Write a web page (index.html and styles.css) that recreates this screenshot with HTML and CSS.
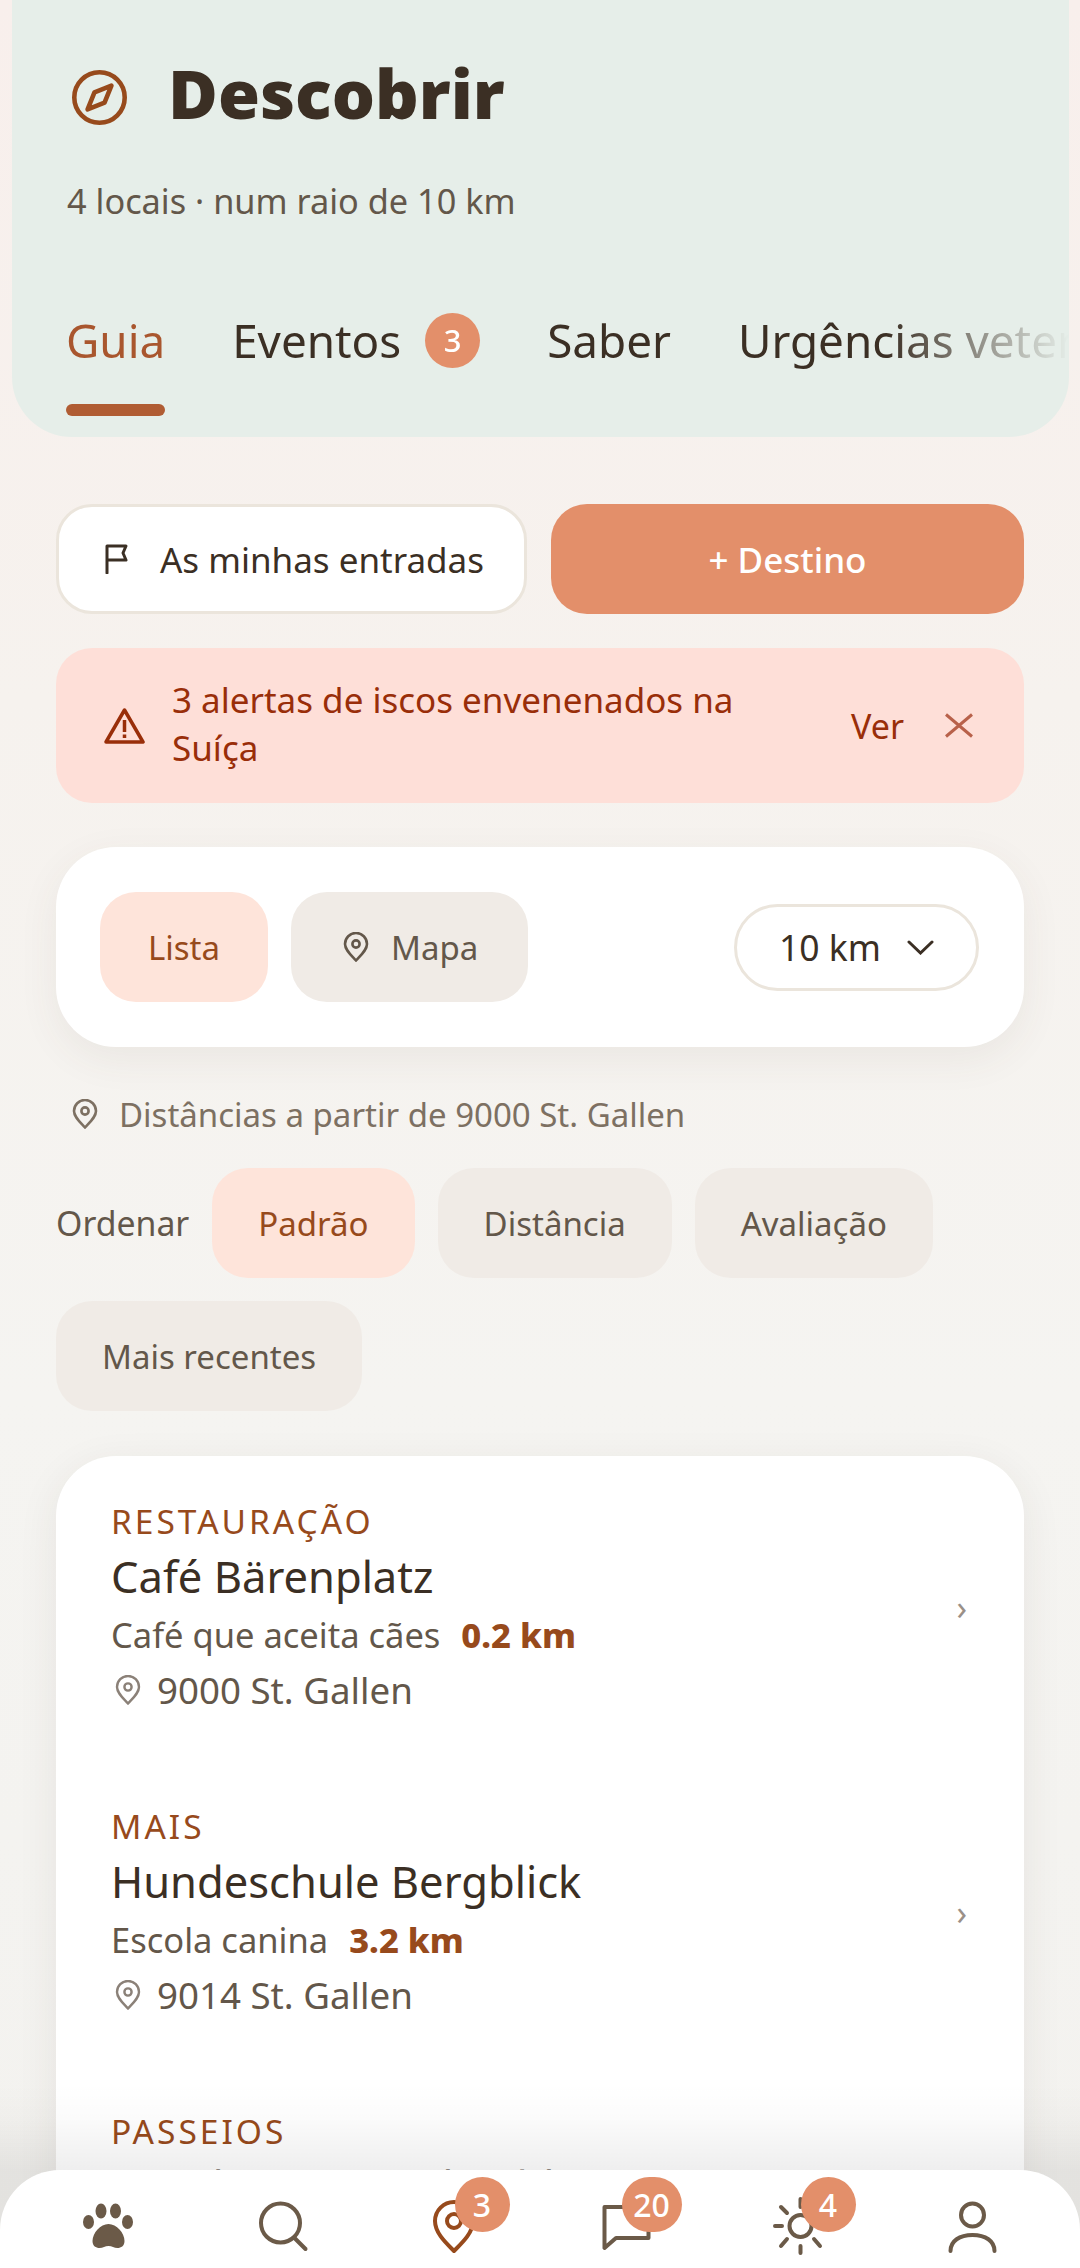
FILE: index.html
```html
<!DOCTYPE html>
<html lang="pt">
<head>
  <meta charset="UTF-8">
  <title>Descobrir</title>
  <link rel="stylesheet" href="styles.css">
</head>
<body>
  <div class="screen">
    <header class="top">
      <div class="title-row">
        <svg class="compass" viewBox="0 0 24 24" fill="none" stroke="#974a1c" stroke-width="2" stroke-linejoin="round" stroke-linecap="round">
          <circle cx="12" cy="12" r="11"/>
          <path d="M17.200 6.800L14.200 14.200 6.800 17.200 9.800 9.800z"/>
        </svg>
        <h1>Descobrir</h1>
      </div>
      <p class="subtitle">4 locais · num raio de 10 km</p>
      <nav class="tabs">
        <span class="tab active">Guia</span>
        <span class="tab">Eventos <b class="tab-badge">3</b></span>
        <span class="tab">Saber</span>
        <span class="tab">Urgências veterinárias</span>
      </nav>
    </header>

    <main class="content">
      <div class="actions">
        <button class="btn btn-white">
          <svg class="flag" viewBox="0 0 23 30" fill="none" stroke="#3b2f24" stroke-width="3" stroke-linejoin="round" stroke-linecap="round">
            <path d="M2 29V2h19l-3 7 3 7H2"/>
          </svg>
          As minhas entradas
        </button>
        <button class="btn btn-orange">+ Destino</button>
      </div>

      <div class="alert">
        <svg class="warn" viewBox="0 0 41 37" fill="none" stroke="#992e09" stroke-width="3.500" stroke-linejoin="round">
          <path d="M20.500 3L39 35H2z"/>
          <path d="M20.500 13v12M20.500 27.500v3.500"/>
        </svg>
        <p class="alert-text">3 alertas de iscos envenenados na Suíça</p>
        <span class="alert-link">Ver</span>
        <svg class="close" viewBox="0 0 30 25" fill="none" stroke="#b8614a" stroke-width="3">
          <path d="M2 1.500l26 22M28 1.500l-26 22"/>
        </svg>
      </div>

      <section class="panel">
        <span class="chip chip-on chip-list">Lista</span>
        <span class="chip chip-map">
          <svg class="pin" viewBox="0 0 26 30" fill="none" stroke="currentColor" stroke-width="2.600"><path d="M13 28.500C8 23 2 18 2 12a11 11 0 0 1 22 0c0 6-6 11-11 16.500z"/><circle cx="13" cy="12" r="3.600"/></svg>
          Mapa
        </span>
        <span class="select">
          10 km
          <svg class="caret" viewBox="0 0 27 15" fill="none" stroke="#3b2f24" stroke-width="3" stroke-linecap="round"><path d="M2 2l11.500 11L25 2"/></svg>
        </span>
      </section>

      <p class="origin">
        <svg class="pin" viewBox="0 0 26 30" fill="none" stroke="currentColor" stroke-width="2.600"><path d="M13 28.500C8 23 2 18 2 12a11 11 0 0 1 22 0c0 6-6 11-11 16.500z"/><circle cx="13" cy="12" r="3.600"/></svg>
        Distâncias a partir de 9000 St. Gallen
      </p>

      <div class="sort">
        <span class="sort-label">Ordenar</span>
        <span class="chip chip-on">Padrão</span>
        <span class="chip">Distância</span>
        <span class="chip">Avaliação</span>
        <span class="chip">Mais recentes</span>
      </div>

      <section class="list">
        <article class="item">
          <div class="item-body">
            <div class="cat">RESTAURAÇÃO</div>
            <div class="name">Café Bärenplatz</div>
            <div class="desc">Café que aceita cães <b class="dist">0.2 km</b></div>
            <div class="loc">
              <svg class="pin" viewBox="0 0 26 30" fill="none" stroke="currentColor" stroke-width="2.400"><path d="M13 28.500C8 23 2 18 2 12a11 11 0 0 1 22 0c0 6-6 11-11 16.500z"/><circle cx="13" cy="12" r="3.600"/></svg>
              <span>9000 St. Gallen</span>
            </div>
          </div>
          <span class="chev">›</span>
        </article>
        <article class="item">
          <div class="item-body">
            <div class="cat">MAIS</div>
            <div class="name">Hundeschule Bergblick</div>
            <div class="desc">Escola canina <b class="dist">3.2 km</b></div>
            <div class="loc">
              <svg class="pin" viewBox="0 0 26 30" fill="none" stroke="currentColor" stroke-width="2.400"><path d="M13 28.500C8 23 2 18 2 12a11 11 0 0 1 22 0c0 6-6 11-11 16.500z"/><circle cx="13" cy="12" r="3.600"/></svg>
              <span>9014 St. Gallen</span>
            </div>
          </div>
          <span class="chev">›</span>
        </article>
        <article class="item">
          <div class="item-body">
            <div class="cat">PASSEIOS</div>
            <div class="name">Hundewiese Bad Wildt</div>
          </div>
        </article>
      </section>
    </main>

    <div class="fade"></div>

    <nav class="bottom">
      <span class="nav-item">
        <svg viewBox="0 0 60 60" fill="#6b5a48"><ellipse cx="10.500" cy="26" rx="5.500" ry="7"/><ellipse cx="23" cy="15" rx="5.500" ry="7.500"/><ellipse cx="37.500" cy="15" rx="5.500" ry="7.500"/><ellipse cx="49.500" cy="26" rx="5.500" ry="7"/><path d="M30.500 28c8 0 16 9 16 17 0 5-3.500 7-7 7-3.500 0-5.500-2-9-2s-5.500 2-9 2c-3.500 0-7-2-7-7 0-8 8-17 16-17z"/></svg>
      </span>
      <span class="nav-item">
        <svg viewBox="0 0 60 60" fill="none" stroke="#6b5a48" stroke-width="4" stroke-linecap="round"><circle cx="29.500" cy="27" r="19.500"/><path d="M43.500 42l11 11"/></svg>
      </span>
      <span class="nav-item">
        <svg viewBox="0 0 60 60" fill="none" stroke="#974a1c" stroke-width="4" stroke-linejoin="round"><path d="M30 55C22 47 11 37 11 25a19 19 0 0 1 38 0c0 12-11 22-19 30z"/><circle cx="30" cy="25" r="7"/></svg>
        <b class="nav-badge">3</b>
      </span>
      <span class="nav-item">
        <svg viewBox="0 0 60 60" fill="none" stroke="#6b5a48" stroke-width="4" stroke-linejoin="round"><path d="M7.500 11H51.500V42H19L7.500 52z"/></svg>
        <b class="nav-badge nav-badge-wide">20</b>
      </span>
      <span class="nav-item">
        <svg viewBox="0 0 60 60" fill="none" stroke="#6b5a48" stroke-width="4" stroke-linecap="round"><circle cx="30.500" cy="30" r="11"/><path d="M30.500 3v8M30.500 50v7M5 30h7M49 30h7M11 11l6 6M44 43l6 7M17 43l-6 7M50 11l-6 6"/></svg>
        <b class="nav-badge">4</b>
      </span>
      <span class="nav-item">
        <svg viewBox="0 0 60 60" fill="none" stroke="#6b5a48" stroke-width="4" stroke-linecap="round"><circle cx="29.500" cy="19" r="11.500"/><path d="M7.500 55c0-10 9-16 22-16s22 6 22 16"/></svg>
      </span>
    </nav>
  </div>
</body>
</html>
```

FILE: styles.css
```css
* {
  box-sizing: border-box;
}

html, body {
  margin: 0;
  padding: 0;
}

body {
  font-family: "Noto Sans", "Open Sans", sans-serif;
  color: #3b2f24;
}

.screen {
  position: relative;
  width: 1080px;
  height: 2268px;
  overflow: hidden;
  background: linear-gradient(180deg, #f8efec 0, #f6f2ee 700px, #f5f4f1 1400px, #f3f2ef 100%);
}

/* header */
.top {
  margin-left: 12px;
  width: 1057px;
  height: 437px;
  padding: 48px 0 0 54px;
  background: #e6eee9;
  border-radius: 0 0 60px 60px;
  overflow: hidden;
}

.title-row {
  display: flex;
  align-items: center;
  gap: 41px;
  height: 90px;
  padding-left: 6px;
}

.compass {
  width: 55px;
  height: 55px;
  flex: none;
  margin-top: 8px;
}

h1 {
  margin: 0;
  font-size: 68px;
  font-weight: 900;
  line-height: 90px;
  color: #3b2f24;
}

.subtitle {
  margin: 40px 0 0 1px;
  font-size: 34.300px;
  line-height: 46px;
  color: #63574a;
}

.tabs {
  display: flex;
  align-items: flex-start;
  gap: 67px;
  height: 130px;
  margin-top: 85px;
  white-space: nowrap;
  font-size: 45.800px;
  line-height: 62px;
  -webkit-mask-image: linear-gradient(90deg, #000 820px, transparent 1003px);
  mask-image: linear-gradient(90deg, #000 820px, transparent 1003px);
  overflow: hidden;
}

.tab {
  display: flex;
  align-items: center;
  position: relative;
  height: 62px;
  color: #3b2f24;
}

.tab.active {
  color: #a9562e;
}

.tab.active::after {
  content: "";
  position: absolute;
  left: 0;
  right: 0;
  top: 95px;
  height: 12px;
  border-radius: 6px;
  background: #b05c33;
}

.tab-badge {
  display: inline-flex;
  justify-content: center;
  align-items: center;
  width: 55px;
  height: 55px;
  margin-left: 24px;
  border-radius: 50%;
  background: #e38f6a;
  color: #fff;
  font-size: 31px;
  font-weight: 500;
}

/* main column */
.content {
  padding: 67px 56px 0;
}

.actions {
  display: flex;
  gap: 24px;
}

.btn {
  flex: 1;
  height: 110px;
  display: flex;
  justify-content: center;
  align-items: center;
  padding: 0;
  font-family: inherit;
  font-size: 35px;
  border-radius: 36px;
  border: 0;
}

.btn-white {
  flex: 0 0 471px;
  padding-left: 6px;
  background: #fff;
  border: 3px solid #ebe5dc;
  color: #3b2f24;
  gap: 32px;
}

.btn-orange {
  background: #e38f6a;
  color: #fff;
  font-weight: 500;
}

.flag {
  width: 23px;
  height: 30px;
}

.alert {
  display: flex;
  align-items: center;
  margin-top: 34px;
  height: 155px;
  padding: 0 50px 0 48px;
  background: #fedfd8;
  border-radius: 36px;
  color: #992e09;
  font-size: 35px;
}

.warn {
  width: 41px;
  height: 37px;
  flex: none;
  margin-right: 27px;
}

.alert-text {
  flex: 1;
  margin: 0 0 3px;
  line-height: 48px;
  padding-right: 80px;
}

.alert-link {
  font-size: 34px;
}

.close {
  width: 30px;
  height: 25px;
  margin-left: 40px;
}

.panel {
  display: flex;
  align-items: center;
  gap: 23px;
  margin-top: 44px;
  height: 200px;
  padding: 0 45px 0 44px;
  background: #fff;
  border-radius: 60px;
  box-shadow: 0 12px 40px rgba(90, 70, 50, 0.07);
}

.chip {
  display: inline-flex;
  align-items: center;
  justify-content: center;
  gap: 22px;
  height: 110px;
  padding: 0 46px;
  border-radius: 36px;
  background: #f0ebe6;
  color: #63574a;
  font-size: 33px;
}

.chip-list {
  padding: 0 48px;
}

.chip-map {
  padding: 0 50px 0 52px;
}

.chip-on {
  background: #fee4da;
  color: #974a1c;
}

.pin {
  width: 26px;
  height: 30px;
  flex: none;
}

.select {
  display: flex;
  align-items: center;
  gap: 26px;
  margin-left: auto;
  height: 87px;
  padding: 0 42px;
  border: 3px solid #ebe5dc;
  border-radius: 44px;
  font-size: 35.500px;
  color: #3b2f24;
}

.caret {
  width: 27px;
  height: 15px;
}

.origin {
  display: flex;
  align-items: center;
  gap: 21px;
  margin: 45px 0 0 16px;
  height: 44px;
  font-size: 33px;
  color: #7d7062;
}

.sort {
  display: flex;
  flex-wrap: wrap;
  align-items: center;
  gap: 23px;
  margin-top: 32px;
}

.sort-label {
  font-size: 33.800px;
  color: #63574a;
}

/* list card */
.list {
  margin-top: 45px;
  padding: 45px 0 0;
  height: 900px;
  background: #fff;
  border-radius: 60px;
  box-shadow: 0 10px 40px rgba(60, 50, 40, 0.08);
}

.item {
  display: flex;
  align-items: center;
  padding: 0 57px 93px 55px;
}

.item-body {
  flex: 1;
}

.cat {
  font-size: 33.500px;
  line-height: 40px;
  letter-spacing: 3px;
  color: #974a1c;
}

.name {
  margin-top: 8px;
  font-size: 43.500px;
  line-height: 54px;
  color: #3b2f24;
}

.desc {
  margin-top: 9px;
  font-size: 34.500px;
  line-height: 46px;
  color: #63574a;
}

.dist {
  margin-left: 12px;
  color: #974a1c;
  font-weight: 800;
}

.loc {
  display: flex;
  align-items: center;
  gap: 16px;
  margin-top: 9px;
  font-size: 36.700px;
  line-height: 46px;
  color: #63574a;
}

.loc .pin {
  margin-left: 4px;
  color: #8b8178;
}

.chev {
  font-size: 34px;
  color: #9a9088;
}

/* bottom nav */
.fade {
  position: absolute;
  left: 0;
  right: 0;
  bottom: 0;
  height: 185px;
  background: linear-gradient(180deg, rgba(0, 0, 0, 0), rgba(0, 0, 0, 0.015) 35px, rgba(0, 0, 0, 0.065) 88px);
}

.bottom {
  position: absolute;
  left: 0;
  right: 0;
  bottom: 0;
  height: 98px;
  padding: 26px 21px 0;
  display: grid;
  grid-template-columns: repeat(6, 1fr);
  justify-items: center;
  background: #fff;
  border-radius: 60px 60px 0 0;
}

.nav-item {
  position: relative;
  width: 60px;
  height: 60px;
}

.nav-item svg {
  display: block;
  width: 60px;
  height: 60px;
}

.nav-badge {
  position: absolute;
  top: -19px;
  left: 31px;
  width: 55px;
  height: 55px;
  display: flex;
  justify-content: center;
  align-items: center;
  border-radius: 50%;
  background: #e38f6a;
  color: #fff;
  font-size: 32px;
  font-weight: 500;
}

.nav-badge-wide {
  left: 25px;
  width: 60px;
  border-radius: 28px;
}
```
